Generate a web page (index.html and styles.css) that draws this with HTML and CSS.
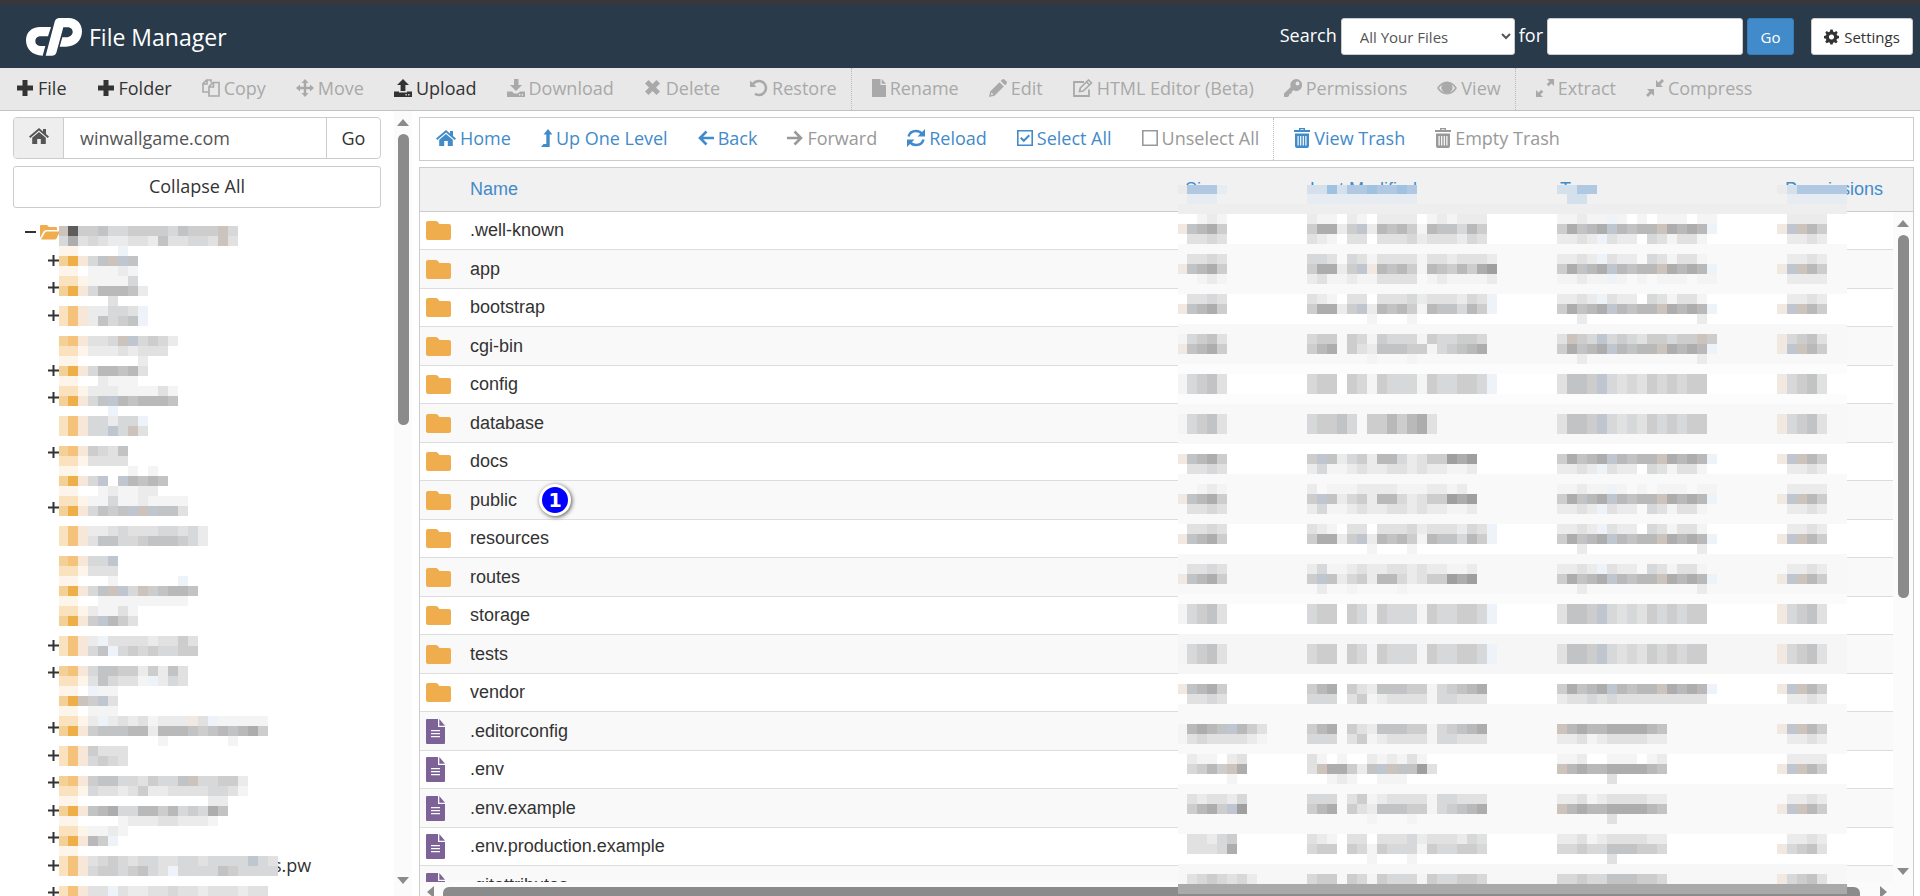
FILE: index.html
```html
<!DOCTYPE html>
<html lang="en">
    <head>
        <meta charset="utf-8">
        <title>File Manager</title>
        <link rel="stylesheet" href="styles.css">
    </head>
    <body>
        <!-- icons used more than once -->
        <svg class="defs" aria-hidden="true">
            <symbol id="plus" viewBox="0 0 18 18"><path d="M6.500 1h5v5.500H17v5h-5.500V17h-5v-5.500H1v-5h5.500z"/></symbol>
            <symbol id="house" viewBox="0 0 20 18"><path d="M10 1 0 9.500l1.300 1.400L10 3.600l8.700 7.300L20 9.500l-3-2.600V2h-3v2.400z"/><path d="M10 5 3.200 10.700V17h5v-5h3.600v5h5v-6.300z"/></symbol>
            <symbol id="bin" viewBox="0 0 16 20"><path d="M5 0h6v2h5v2H0V2h5zm1.500 1.200V2h3v-.8z" fill-rule="evenodd"/><path d="M1 5.500h14V18q0 2-2 2H3q-2 0-2-2zM3.500 8v9.500h1.200V8zm2.600 0v9.500h1.200V8zm2.600 0v9.500h1.200V8zm2.600 0v9.500h1.200V8z" fill-rule="evenodd"/></symbol>
            <symbol id="folder" viewBox="0 0 25 19"><path d="M2 0h8q1 0 1.700.8L13.500 3H23q2 0 2 2v12q0 2-2 2H2q-2 0-2-2V2q0-2 2-2z"/></symbol>
            <symbol id="doc" viewBox="0 0 19 25"><path d="M0 1q0-1 1-1h11v8h7v16q0 1-1 1H1q-1 0-1-1zM5 11v1.300h9V11zm0 3v1.300h9V14zm0 3v1.300h9V17z" fill-rule="evenodd"/><path d="M13.300 0 19 6.700h-5.700z"/></symbol>
            <symbol id="expand" viewBox="0 0 11 11"><path d="M4.500 0h2v4.500H11v2H6.500V11h-2V6.500H0v-2h4.500z"/></symbol>
        </svg>

        <header class="top">
            <svg class="logo" viewBox="0 0 168 114"><path d="M75 27 66 55H46C34 55 28 61 28 69C28 79 35 84 46 84H58L50 113C18 113 0 92 0 67C0 43 17 27 43 27z"/><path d="M59 113 86 11Q89 0 101 0H128C152 0 168 17 168 40C168 68 147 86 120 86H101L109 58H121C132 58 140 50 140 42C140 33 133 28 124 28H112L91 104Q88 113 77 113z"/></svg>
            <h1>File Manager</h1>
            <form class="search">
                <label for="search_scope">Search</label>
                <select id="search_scope"><option>All Your Files</option></select>
                <label for="search_text">for</label>
                <input type="text" id="search_text">
                <button type="button" class="go">Go</button>
                <button type="button" class="settings"><svg width="15" height="16" viewBox="0 0 16 16"><path fill-rule="evenodd" d="M6.800 0h2.400l.5 2.200 1.400.6 2-1.200 1.500 1.500-1.200 2 .6 1.400 2 .5v2.200l-2.100.6-.6 1.300 1.200 2-1.600 1.600-2-1.200-1.300.5L9.200 16H6.800l-.5-2-1.400-.5-2 1.200-1.600-1.600 1.200-2L2 9.800 0 9.200V7l2-.5.6-1.400-1.200-2L2.900 1.600l2 1.200 1.400-.6zM8 5.200a2.800 2.800 0 1 0 .01 0z"/></svg>Settings</button>
            </form>
        </header>

        <nav class="toolbar">
            <button class="on"><svg><use href="#plus"/></svg>File</button>
            <button class="on"><svg><use href="#plus"/></svg>Folder</button>
            <button><svg viewBox="0 0 18 18"><path fill="none" stroke="currentColor" stroke-width="1.600" d="M7 13H1V4.500L4.500 1H9v2.500M1 5h4V1M7 7.500 11 3.500h6V17H7zM7 8h4.500V3.500"/></svg>Copy</button>
            <button><svg viewBox="0 0 18 18"><path d="M9 0l3.500 4h-2.300v3.800H14V5.500L18 9l-4 3.500v-2.300h-3.800V14h2.300L9 18l-3.500-4h2.300v-3.800H4v2.300L0 9l4-3.500v2.300h3.800V4H5.500z"/></svg>Move</button>
            <button class="on"><svg viewBox="0 0 18 18"><path d="M9 0l6 6h-3.600v6H6.600V6H3z"/><path fill-rule="evenodd" d="M0 12.500h5v1h8v-1h5V18H0zm11.500 2.600v1.300h1.300v-1.300zm2.700 0v1.300h1.300v-1.300z"/></svg>Upload</button>
            <button><svg viewBox="0 0 18 18"><path d="M7 0h4.500v6H15l-6 6-6-6h4z"/><path fill-rule="evenodd" d="M0 12.500h5l2 2h4l2-2h5V18H0zm12 2.600v1.300h1.300v-1.300zm2.700 0v1.300H16v-1.300z"/></svg>Download</button>
            <button><svg viewBox="0 0 18 18"><path d="M4.500 1 8.500 5l4-4 3.500 3.500-4 4 4 4-3.500 3.500-4-4-4 4L1 12.500l4-4-4-4z"/></svg>Delete</button>
            <button><svg viewBox="0 0 18 18"><path d="M0 1.500V8h6.500z"/><path fill="none" stroke="currentColor" stroke-width="2.600" d="M2.500 5.500Q5 2 9 2a7 7 0 0 1 0 14q-2.500 0-4-1.200"/></svg>Restore</button>
            <button class="split"><svg class="slim" viewBox="0 0 14 18"><path d="M0 0h8.500v6H14v12H0z"/><path d="M9.700 0 14 4.700H9.700z"/></svg>Rename</button>
            <button><svg viewBox="0 0 18 18"><path d="M0 18l1.200-5.500L10.500 3.200l4.300 4.300L5.500 16.800zM11.700 2 13.200.5q1.200-1 2.300 0l2 2q1 1.100 0 2.300L16 6.300zM2.500 13.500l-.6 2.600 2.600-.6z" fill-rule="evenodd"/></svg>Edit</button>
            <button><svg class="wide" viewBox="0 0 20 18"><path fill="none" stroke="currentColor" stroke-width="1.800" d="M16 10.500V17H1V3h10"/><path fill="none" stroke="currentColor" stroke-width="1.600" d="M6.500 12.500 7.300 9 15.500 1l3 3-8.300 8zM13.500 3l3 3"/></svg>HTML Editor (Beta)</button>
            <button><svg viewBox="0 0 18 18"><path fill-rule="evenodd" d="M12 0a6 6 0 1 1-2.700 11.300L7.800 12.800 7.500 14.500 5.500 15l-.5 2-1.500 1H0v-3.500L6.700 8A6 6 0 0 1 12 0zm1.500 2.600a1.900 1.900 0 1 0 .01 0z"/></svg>Permissions</button>
            <button><svg class="wide" viewBox="0 0 20 18"><path fill-rule="evenodd" d="M0 9Q4 2.500 10 2.500T20 9Q16 15.500 10 15.500T0 9zm2 0q3.300 5 8 5t8-5q-1.500-2.400-3.500-3.600A5.500 5.500 0 1 1 5.500 5.400Q3.500 6.600 2 9z"/><path d="M10 4.500a4 4 0 1 1-4 4h2.500Q8.500 7 10 7z"/></svg>View</button>
            <button class="split"><svg viewBox="0 0 18 18"><path d="M11 0h7v7l-2.500-2.500-2.800 2.800-2-2 2.800-2.800zM0 18v-7l2.500 2.500 2.800-2.800 2 2-2.800 2.800L7 18z"/></svg>Extract</button>
            <button><svg viewBox="0 0 18 18"><path d="M10 1l2.500 2.500L16 0l2 2-3.500 3.500L17 8h-7zM8 10v7l-2.500-2.500L2 18l-2-2 3.500-3.500L1 10z"/></svg>Compress</button>
        </nav>

        <main>
            <aside class="sidebar">
                <div class="panel">
                    <form class="path">
                        <button type="button" class="home" aria-label="Home"><svg class="wide"><use href="#house"/></svg></button>
                        <input type="text" aria-label="Path" value="winwallgame.com">
                        <button type="button" class="path_go">Go</button>
                    </form>
                    <button class="collapse">Collapse All</button>
                    <ul class="tree" id="tree">
                        <li class="root"><svg width="11" height="3" viewBox="0 0 11 3"><path d="M0 0h11v2H0z"/></svg><svg class="open" width="20" height="15" viewBox="0 0 20 15"><path d="M0 13V1q0-1 1-1h6l2 2h7q1 0 1 1v2H6q-1.500 0-2.500 1.500z"/><path d="M1 14.500 5 7.500Q5.500 6.500 7 6.500h13l-3.500 7q-.5 1-2 1z"/></svg></li>
                    </ul>
                    <svg class="mosaic tree_mosaic" id="tree_mosaic" width="220" height="680"></svg>
                </div>
                <div class="scroll_v side_scroll"><i class="up"></i><b></b><i class="down"></i></div>
            </aside>

            <section class="files">
                <nav class="actions">
                    <button><svg class="wide"><use href="#house"/></svg>Home</button>
                    <button><svg class="thin" viewBox="0 0 11 18"><path d="M7 0l4.500 5.500H8.700V18H0l2.500-3h2.800V5.500H2.500z"/></svg>Up One Level</button>
                    <button><svg class="mid" viewBox="0 0 16 18"><path fill="none" stroke="currentColor" stroke-width="2.600" d="M8.500 2.500 2 9l6.500 6.500M2 9h14"/></svg>Back</button>
                    <button class="off"><svg class="mid" viewBox="0 0 16 18"><path fill="none" stroke="currentColor" stroke-width="2.600" d="M7.500 2.500 14 9l-6.500 6.500M14 9H0"/></svg>Forward</button>
                    <button><svg viewBox="0 0 18 18"><path fill="none" stroke="currentColor" stroke-width="2.500" d="M1.500 7.500Q3 2 9 2q4 0 6 3M16.500 10.500Q15 16 9 16q-4 0-6-3"/><path d="M18 0v7.500h-7.500zM0 18v-7.500h7.500z"/></svg>Reload</button>
                    <button><svg class="mid" viewBox="0 0 16 18"><path fill="none" stroke="currentColor" stroke-width="1.600" d="M.8 1.800h14.400v14.400H.8z"/><path fill="none" stroke="currentColor" stroke-width="2" d="M3.800 8.800l3 3 5.500-5.500"/></svg>Select All</button>
                    <button class="off"><svg class="mid" viewBox="0 0 16 18"><path fill="none" stroke="currentColor" stroke-width="1.600" d="M.8 1.800h14.400v14.400H.8z"/></svg>Unselect All</button>
                    <button class="split"><svg class="bin"><use href="#bin"/></svg>View Trash</button>
                    <button class="off"><svg class="bin"><use href="#bin"/></svg>Empty Trash</button>
                </nav>

                <div class="listing">
                    <div class="clip">
                        <table>
                            <thead>
                                <tr><th class="c_icon"></th><th>Name</th><th class="c_size">Size</th><th class="c_date">Last Modified</th><th class="c_type">Type</th><th class="c_perm">Permissions</th></tr>
                            </thead>
                            <tbody id="rows"></tbody>
                        </table>
                    </div>
                    <div class="scroll_v list_scroll"><i class="up"></i><b></b><i class="down"></i></div>
                    <div class="scroll_h"><i class="left"></i><b></b><i class="right"></i></div>
                    <svg class="mosaic list_mosaic" id="list_mosaic" width="670" height="710"></svg>
                </div>
            </section>
        </main>

        <script src="script.js"></script>
    </body>
</html>
```
FILE: styles.css
```css
* {
    box-sizing: border-box;
}
body {
    margin: 0;
    height: 100vh;
    display: flex;
    flex-direction: column;
    overflow: hidden;
    font-family: "Open Sans", sans-serif;
    font-size: 18px;
    color: #333;
    background-color: white;
}
button, input, select {
    font-family: inherit;
    font-size: inherit;
    color: inherit;
    margin: 0;
}
button {
    padding: 0;
    border: 0;
    background: none;
    white-space: nowrap;
}
svg {
    fill: currentColor;
    flex: none;
}
.defs {
    display: none;
}

/* header */
.top {
    flex: none;
    height: 68px;
    padding: 0 7px 0 26px;
    display: flex;
    align-items: center;
    color: white;
    background-color: #293a4a;
    border-top: 5px solid #38373c;
}
.logo {
    width: 56px;
    height: 38px;
}
h1 {
    margin: 0 auto 0 7px;
    font-size: 23px;
    font-weight: normal;
}
.search {
    display: flex;
    align-items: center;
    gap: 4px;
}
.search label {
    padding-bottom: 4px;
}
.search select, .search input, .search button {
    height: 37px;
    font-size: 15px;
    border: 1px solid #ccc;
    border-radius: 3px;
    background-color: white;
    color: #555;
}
.search select {
    width: 174px;
    padding: 0 0 0 14px;
}
.search input {
    width: 196px;
}
.search .go {
    width: 47px;
    color: white;
    background-color: #428bca;
    border-color: #357ebd;
}
.search .settings {
    width: 102px;
    margin-left: 13px;
    color: #333;
    display: flex;
    align-items: center;
    justify-content: center;
    gap: 5px;
}

/* toolbars */
.toolbar, .actions {
    flex: none;
    display: flex;
    height: 43px;
    background-color: #e8e8e8;
    border-bottom: 1px solid #c3c3c3;
}
.toolbar button, .actions button {
    display: flex;
    align-items: center;
    gap: 4px;
    padding: 0 14px 2px 16px;
    color: #a9a9a9;
}
.toolbar .on {
    color: #333;
}
.toolbar svg, .actions svg {
    width: 18px;
    height: 18px;
}
.toolbar .split, .actions .split {
    padding-left: 20px;
    border-left: 1px dotted #bbb;
}
.toolbar .slim {
    width: 14px;
}
.toolbar .wide, .actions .wide, .home .wide {
    width: 20px;
    height: 18px;
}
.actions {
    height: 44px;
    background-color: white;
    border: 1px solid #ccc;
}
.actions button {
    color: #428bca;
}
.actions .off {
    color: #999;
}
.actions .thin {
    width: 11px;
}
.actions .mid {
    width: 16px;
}
.actions .bin {
    width: 16px;
    height: 20px;
}

main {
    flex: 1;
    min-height: 0;
    display: flex;
}

/* folder tree */
.sidebar {
    width: 412px;
    flex: none;
    display: flex;
    justify-content: space-between;
}
.panel {
    position: relative;
    width: 381px;
    padding: 6px 0 0 13px;
}
.path {
    display: flex;
    height: 42px;
    border: 1px solid #ccc;
    border-radius: 4px;
    overflow: hidden;
}
.home {
    width: 50px;
    color: #555;
    background-color: #eee;
    border-right: 1px solid #ccc;
}
.path input {
    flex: 1;
    min-width: 0;
    padding: 0 16px;
    border: 0;
    color: #555;
}
.path_go {
    width: 54px;
    border-left: 1px solid #ccc;
}
.collapse {
    width: 100%;
    height: 42px;
    margin-top: 7px;
    padding-bottom: 2px;
    border: 1px solid #ccc;
    border-radius: 3px;
}
.tree {
    list-style: none;
    margin: 11px 0 0;
    padding: 0;
}
.tree li {
    display: flex;
    align-items: center;
    height: 27px;
    padding-left: 35px;
}
.tree li:nth-child(even) {
    height: 28px;
}
.tree .root {
    padding-left: 12px;
}
.open {
    margin-left: 4px;
    color: #f0ad4e;
}
.tree span {
    margin-left: 214px;
}
.mosaic {
    position: absolute;
    shape-rendering: crispEdges;
}
.tree_mosaic {
    left: 59px;
    top: 115px;
}

/* file list */
.files {
    flex: 1;
    min-width: 0;
    display: flex;
    flex-direction: column;
    gap: 6px;
    padding: 6px 6px 0 7px;
}
.listing {
    position: relative;
    flex: 1;
    min-height: 0;
    border: 1px solid #ccc;
    border-bottom: 0;
    font-family: "Liberation Sans", Arial, sans-serif;
}
.clip {
    position: absolute;
    inset: 0 0 13px;
    overflow: hidden;
}
table {
    width: 100%;
    table-layout: fixed;
    border-collapse: separate;
    border-spacing: 0;
}
th, td {
    padding: 0;
    text-align: left;
    border-bottom: 1px solid #ddd;
}
th {
    height: 44px;
    font-weight: normal;
    color: #428bca;
    background-color: #f1f1f1;
    border-color: #ccc;
}
td {
    height: 38px;
    position: relative;
}
tr:nth-child(even) td {
    height: 39px;
    background-color: #f9f9f9;
}
.c_icon {
    width: 50px;
}
.c_size {
    width: 125px;
}
.c_date {
    width: 250px;
}
.c_type {
    width: 225px;
}
.c_perm {
    width: 128px;
}
td svg {
    display: block;
    margin-left: 6px;
}
.folder {
    width: 25px;
    height: 19px;
    color: #f0ad4e;
}
.doc {
    width: 19px;
    height: 25px;
    color: #7d6298;
}
.badge {
    position: absolute;
    left: 69px;
    top: 3px;
    width: 32px;
    height: 32px;
    border: 3px solid white;
    border-radius: 50%;
    background-color: #00f;
    color: white;
    font: bold 19px/26px "DejaVu Sans", sans-serif;
    text-align: center;
    box-shadow: 1px 1px 4px #555;
}
.list_mosaic {
    right: 65px;
    top: 17px;
}

/* scrollbars */
.scroll_v {
    width: 18px;
    display: flex;
    flex-direction: column;
    align-items: center;
    background-color: #fbfbfb;
}
.scroll_v b, .scroll_h b {
    background-color: #8b8b8b;
    border-radius: 6px;
}
.scroll_v b {
    width: 11px;
}
.scroll_v i, .scroll_h i {
    border: 6px solid transparent;
}
.scroll_v .up {
    border-top: 0;
    border-bottom: 7px solid #8b8b8b;
}
.scroll_v .down {
    margin-top: auto;
    border-bottom: 0;
    border-top: 7px solid #8b8b8b;
}
.side_scroll {
    padding: 8px 0 12px;
}
.side_scroll b {
    height: 291px;
    margin-top: 8px;
}
.list_scroll {
    position: absolute;
    right: 0;
    top: 44px;
    bottom: 14px;
    width: 20px;
    padding: 8px 0 7px;
}
.list_scroll b {
    height: 363px;
    margin-top: 8px;
}
.scroll_h {
    position: absolute;
    left: 0;
    right: 0;
    bottom: 0;
    height: 14px;
    display: flex;
    align-items: flex-end;
    gap: 9px;
    padding: 0 26px 0 7px;
    overflow: hidden;
    background-color: #fbfbfb;
}
.scroll_h b {
    flex: 1;
    height: 9px;
    border-radius: 6px 6px 0 0;
}
.scroll_h i {
    margin-bottom: -2px;
}
.scroll_h .left {
    border-left: 0;
    border-right: 7px solid #8b8b8b;
}
.scroll_h .right {
    margin-left: 11px;
    border-right: 0;
    border-left: 7px solid #8b8b8b;
}
```
FILE: script.js
```js
// dom queries
const rows = document.querySelector('#rows');
const tree = document.querySelector('#tree');
const tree_mosaic = document.querySelector('#tree_mosaic');
const list_mosaic = document.querySelector('#list_mosaic');

// names ending in / are folders
const files = ['.well-known/', 'app/', 'bootstrap/', 'cgi-bin/', 'config/', 'database/', 'docs/', 'public/',
    'resources/', 'routes/', 'storage/', 'tests/', 'vendor/', '.editorconfig', '.env', '.env.example',
    '.env.production.example', '.gitattributes'];

files.forEach(function(name) {
    let icon = name.endsWith('/') ? 'folder' : 'doc';
    let title = name.replace('/', '');
    let badge = title == 'public' ? '<b class="badge">1</b>' : '';
    rows.innerHTML += `<tr><td><svg class="${icon}"><use href="#${icon}"/></svg></td><td>${title}${badge}</td><td></td><td></td><td></td><td></td></tr>`;
});

// one character for each tree row, + can be expanded
for (let c of '+++-++-+-+----++-+++++++') {
    let li = document.createElement('li');
    if (c == '+') {
        li.innerHTML = '<svg width="11" height="11"><use href="#expand"/></svg>';
    }
    tree.appendChild(li);
}
tree.children[23].innerHTML += '<span>s.pw</span>';

// censored areas, every character is one block
const colors = {
    1: '#f4f4f4', 2: '#ebebeb', 3: '#e1e1e1', 4: '#d7d8d9', 5: '#cdcdcd', 6: '#c2c3c4', 7: '#b9b9b9', 8: '#adadae', 9: '#a09f9f',
    X: '#5f5d5b', b: '#bfc6d0', w: '#cdc3bd', n: '#f1e8e1', i: '#eef3fa',
    O: '#eeae48', P: '#f3d096', o: '#f4c27a', p: '#f9e2bd', f: '#fef5ea', q: '#f7e7d8',
    A: '#b0c8e2', B: '#9fc1e2', C: '#d4e1ec', D: '#e6ecf1'
};

// the first column is 9px wide, the others 10px
function blocks(svg, col, y, h, text) {
    for (let i = 0; i < text.length; i++) {
        let fill = colors[text[i]];
        let n = col + i;
        if (fill) {
            block(svg, n ? n * 10 - 1 : 0, y, n ? 10 : 9, h, fill);
        }
    }
}

function block(svg, x, y, w, h, fill) {
    let r = document.createElementNS('http://www.w3.org/2000/svg', 'rect');
    r.setAttribute('x', x);
    r.setAttribute('y', y);
    r.setAttribute('width', w);
    r.setAttribute('height', h);
    r.setAttribute('fill', fill);
    svg.appendChild(r);
}

const tree_lines = [
    'wX55644555546555w4', '4834322332633443w3', 'ff0000i', 'POq46wb6', 'ff011121', 'ppf11114', 'POq477762', '00000300',
    'poq22443i', 'poq26456i', '', 'Poq334wb4542', 'ppf22232333', 'ff0000002', 'POq477673', 'ff0021110',
    'ppf222111131', 'POq46b767776', '00000i', 'poq44244i', 'poq44b4w3', '', 'Poq5436', 'ppf3333',
    'ff000001010', 'POq4b0b7676', 'ff001211220', 'ppf1141121111', 'POq4656bwb663', '', 'poq223433344342', 'poq366445666542',
    '', 'Poq44b', 'ppf333', 'ff0001000000i', 'POq46wb4w56776', 'ff00111111111', 'ppf21131', 'POq5b753', '',
    'poq2i333323353', 'poq46i45454455', '', 'Poq4665525263', 'ppf364331i243', 'ff0i11', 'POw5b3', 'ff0111',
    'ppf2i23231222n3i11111', 'POq566677277765676785', '000000000010000001', 'poq5333', 'poq4543',
    '', 'Poq5664435446w44552', 'ppf4332352233334431', 'ff000000000000022', 'POq67844775745486', 'ff00001222332221',
    'ppf1121', 'POq75i', 'ff', 'poq3454344334434444b43', 'poq45545643i4444654444', '', 'poq33i322334332333233'
];
tree_lines.forEach(function(line, i) {
    blocks(tree_mosaic, 0, i * 10, 10, line);
});

// kinds of line: f faint, l light, m middle, d dark, v only the descenders
const sizes = {f: '00121', l: '03343', m: '14563', d: 'n6785', v: ''};
const dates = {f: '2110210222201212222', l: '321033033342333243i', m: '455054154441544554i', d: '58825b276751766475i', v: '0000001000100000000'};
const apps = {l: '4430431333313323332', d: '58825bn767517657589', f: '2311211333301211112'};
const weeks = {f: '20111222211122120', l: '24112322332322112', m: '45424465465564567', d: '5b624527742355989', v: '02001000010'};
const days = {f: '3101002121310', l: '3111003221120', m: '4556405575783', l2: '', d: '3w88526bw6693', v: '0012100111'};
const cached = {l: '444035123333144333', d: '578053266655145678'};
const types = {f: '11211i1010111011', l: '2232i3220431331', m: '3w54b454355455w5', d: '58678b7677w8787i', v: '002000000000002'};
const mixed = {m: '3665b4343545455', d: '58678b7677w8787i', l: '233434333333333'};
const texts = {f: '11200111012', l: '22312333322', m: '44544666554', d: 'w7877888876', v: '00000300000'};
const perms = {f: '02222', l: '02232', m: 'n4563', d: 'nbw75', v: ''};

// y, kinds of the lines, width of the date, then date and type columns
const list_rows = [
    [214, 'fdl', 18, dates, types], [254, 'ldf', 19, apps, types], [294, 'ldv', 19, dates, types], [334, 'mdv', 18, {m: dates.m, d: cached.d, v: dates.v}, types],
    [374, 'mm', 19, dates, mixed], [414, 'mm', 13, days, mixed], [454, 'dl', 17, weeks, types], [484, 'fdl', 17, weeks, types],
    [524, 'ldv', 19, dates, types], [564, 'ldv', 17, weeks, types], [604, 'mm', 19, dates, mixed], [644, 'mm', 19, dates, mixed],
    [684, 'dl', 18, cached, mixed], [724, 'dl', 18, cached, texts, {d: '17876b753', l: '134333321'}],
    [754, 'fdv', 13, days, texts, {f: '0211023', d: '04575w8', v: '000001'}], [794, 'ldv', 18, {l: cached.l, d: cached.d, v: dates.v}, texts, {l: '0323324', d: '05785b9', v: ''}],
    [834, 'lmv', 18, dates, texts, {l: '033245', m: '033348', v: ''}], [874, 'm', 18, dates, texts, {m: '03454342'}]
];

// band starts and background colors
const bands = [[204, '#eeeeee'], [214, '#fff'], [244, '#f9f9f9'], [294, '#fff'], [324, '#f8f8f8'], [364, '#fcfcfc'],
    [374, '#fff'], [394, '#fcfcfc'], [404, '#f8f8f8'], [444, '#fff'], [474, '#f9f9f9'], [524, '#fff'], [554, '#f8f8f8'],
    [594, '#fbfbfb'], [604, '#fff'], [634, '#f6f6f6'], [674, '#fff'], [704, '#f9f9f9'], [754, '#fff'], [784, '#f9f9f9'],
    [834, '#fff'], [864, '#f7f7f7'], [884, '#aaa'], [894]];

const start = 185;
block(list_mosaic, 0, 0, 669, 19, '#f1f1f1');
for (let i = 0; i < bands.length - 1; i++) {
    block(list_mosaic, 0, bands[i][0] - start, 669, bands[i + 1][0] - bands[i][0], bands[i][1]);
}

// header labels
[['2AAAD', 0], ['CCBCAABAABA', 13], ['CCAA', 38], ['2CAAAAA', 60]].forEach(function(label) {
    blocks(list_mosaic, label[1], 0, 9, label[0]);
});
[['DDD', 1], ['DDDDDDDDDDD', 13], ['CC', 39], ['DDDDDD', 61]].forEach(function(label) {
    blocks(list_mosaic, label[1], 9, 10, label[0]);
});

list_rows.forEach(function(row) {
    [...row[1]].forEach(function(kind, i) {
        let y = row[0] + i * 10 - start;
        blocks(list_mosaic, 0, y, 10, (row[5] || sizes)[kind]);
        blocks(list_mosaic, 13, y, 10, row[3][kind].slice(0, row[2]));
        blocks(list_mosaic, 38, y, 10, row[4][kind]);
        blocks(list_mosaic, 60, y, 10, perms[kind]);
    });
});
```
